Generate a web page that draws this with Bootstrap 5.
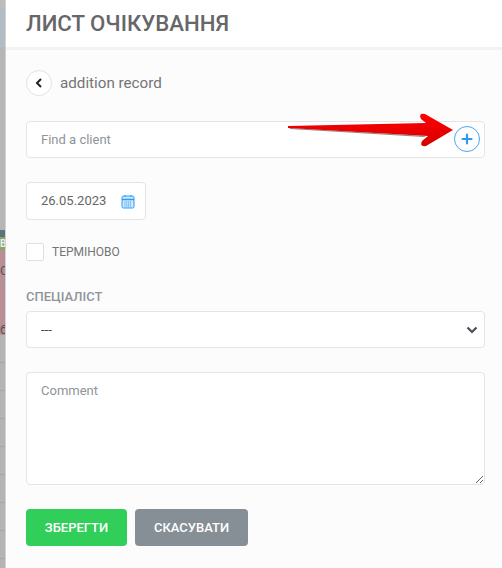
<!DOCTYPE html>
<html lang="uk">
<head>
  <meta charset="UTF-8">
  <meta name="viewport" content="width=device-width, initial-scale=1.0">
  <title>Лист очікування</title>
  <link href="https://cdn.jsdelivr.net/npm/bootstrap@5.3.2/dist/css/bootstrap.min.css" rel="stylesheet">
  <script defer src="https://cdn.jsdelivr.net/npm/bootstrap@5.3.2/dist/js/bootstrap.bundle.min.js"></script>
  <style>
    html, body { height: 100%; overflow: hidden; }
    body { font-family: Roboto, "Liberation Sans", sans-serif; background: #fcfcfc; color: #6c6c6c; }
    .side-strip { width: 6px; flex: none; background: #b4b4b4; border-right: 1px solid #d2d2d2; overflow: hidden; font-size: 13px; line-height: 14px; }
    .strip-top { height: 8px; background: #bcbcbc; }
    .strip-blue { height: 39px; background: #b3bcc2; }
    .strip-gray { height: 183px; background: #b6b6b6; }
    .strip-slate { height: 7px; background: #5f7179; }
    .strip-green { height: 13px; background: #89a65c; color: #eee; font-weight: 700; font-size: 10px; line-height: 13px; }
    .strip-pink { height: 85px; background: #b98f95; color: #555; padding-top: 14px; }
    .strip-pink span { display: block; }
    .strip-pink span + span { margin-top: 45px; }
    .strip-row { height: 28px; border-bottom: 1px solid #a6a6a6; }
    .wl-panel { min-width: 0; height: 568px; }
    .wl-head { height: 50px; padding: 0 20px; background: #fff; border-bottom: 3px solid #f2f2f2; }
    .wl-head h1 { font-size: 22.2px; font-weight: 500; line-height: 47px; margin: 0; color: #666769; }
    .wl-body { padding: 20px 17px 0 20px; }
    .back-btn { width: 26px; height: 26px; border: 1px solid #e2e2e2; border-radius: 50%; background: #fff; padding: 0; }
    .back-title { font-size: 15.2px; color: #757575; }
    .wl-input { background-color: #fff; border: 1px solid #e4e4e4; border-radius: 4px; font-size: 13px; color: #666; }
    .wl-input::placeholder { color: #8f9499; opacity: 1; }
    .client-row { height: 37px; margin-top: 25px; }
    .client-row input { height: 37px; padding: 0 14px; }
    .add-btn { right: 5px; top: 5px; width: 26px; height: 26px; border: 1px solid #4aa5f2; border-radius: 50%; background: #fff; padding: 0; }
    .arrow-over { left: 262px; top: -10px; pointer-events: none; }
    .date-box { width: 120px; height: 38px; margin-top: 24px; padding: 0 10px 0 14px; }
    .urgent-row { margin-top: 23px; height: 18px; }
    .urgent-box { width: 18px; height: 18px; border: 1px solid #e0e0e0; border-radius: 2px; background: #fff; }
    .urgent-text { font-size: 12px; color: #757575; }
    .spec-label { font-size: 13px; font-weight: 500; color: #8f959b; margin: 29px 0 7px; line-height: 14px; display: block; }
    .wl-select { height: 37px; padding: 0 36px 0 14px; font-size: 13px; color: #444; border-color: #e4e4e4; border-radius: 4px;
      background-image: url("data:image/svg+xml,%3csvg xmlns='http://www.w3.org/2000/svg' viewBox='0 0 12 8'%3e%3cpath fill='none' stroke='%23495057' stroke-width='2.2' d='M1.5 1.5 6 6l4.5-4.5'/%3e%3c/svg%3e");
      background-size: 12px 8px; background-position: right 6px center; }
    .wl-comment { height: 113px; margin-top: 24px; padding: 8px 14px; resize: both; width: 100%; display: block; }
    .wl-actions { margin-top: 24px; gap: 8px; }
    .wl-btn { height: 37px; border: 0; border-radius: 4px; color: #fff; font-size: 13px; font-weight: 500; padding: 0; }
    .wl-save { width: 101px; background: #31ce5a; }
    .wl-cancel { width: 113px; background: #868e96; }
  </style>
</head>
<body class="d-flex">
  <div class="side-strip">
    <div class="strip-top"></div>
    <div class="strip-blue"></div>
    <div class="strip-gray"></div>
    <div class="strip-slate"></div>
    <div class="strip-green">ВІ</div>
    <div class="strip-pink"><span>С</span><span>б.</span></div>
    <div class="strip-row"></div>
    <div class="strip-row"></div>
    <div class="strip-row"></div>
    <div class="strip-row"></div>
    <div class="strip-row"></div>
    <div class="strip-row"></div>
    <div class="strip-row"></div>
    <div class="strip-row"></div>
    <div class="strip-row"></div>
  </div>
  <div class="wl-panel flex-grow-1">
    <header class="wl-head"><h1>ЛИСТ ОЧІКУВАННЯ</h1></header>
    <form class="wl-body">
      <div class="d-flex align-items-center gap-2">
        <button type="button" class="back-btn d-flex align-items-center justify-content-center">
          <svg width="12" height="12" viewBox="0 0 12 12"><path d="M8 2 4 6l4 4" fill="none" stroke="#222" stroke-width="2"/></svg>
        </button>
        <span class="back-title">addition record</span>
      </div>

      <div class="client-row position-relative">
        <input type="text" class="wl-input w-100" placeholder="Find a client">
        <button type="button" class="add-btn position-absolute d-flex align-items-center justify-content-center">
          <svg width="12" height="12" viewBox="0 0 12 12"><path d="M6 1.5v9M1.5 6h9" stroke="#2f9bf0" stroke-width="2.2" stroke-linecap="round"/></svg>
        </button>
        <svg class="arrow-over position-absolute" width="170" height="42" viewBox="0 0 170 42">
          <defs>
            <linearGradient id="arrowFill" x1="0" y1="0" x2="0" y2="1">
              <stop offset="0" stop-color="#ff0000"/>
              <stop offset="1" stop-color="#d40000"/>
            </linearGradient>
          </defs>
          <path d="M2 17 L138 25 L136 26 L2 18 Z" fill="#8a8a8a"/>
          <path d="M0 15 L138 12 L133 8 Q130 2 137 3 L165 19 L138 35 Q131 36 134 30 L140 25 L0 17 Z" fill="url(#arrowFill)"/>
        </svg>
      </div>

      <div class="date-box wl-input d-flex align-items-center justify-content-between">
        <span>26.05.2023</span>
        <svg width="14" height="15" viewBox="0 0 14 15"><rect x="1" y="2" width="12" height="12" rx="1.5" fill="#cfe8fd" stroke="#2f9bf0"/><path d="M1 5.5h12" stroke="#2f9bf0" stroke-width="1.5"/><path d="M4 1v2M10 1v2" stroke="#2f9bf0"/><path d="M3.5 8h7M3.5 10h7M3.5 12h7" stroke="#2f9bf0" stroke-dasharray="1 .8"/></svg>
      </div>

      <div class="urgent-row d-flex align-items-center gap-2">
        <span class="urgent-box"></span>
        <span class="urgent-text">ТЕРМІНОВО</span>
      </div>

      <label class="spec-label" for="spec">СПЕЦІАЛІСТ</label>
      <select id="spec" class="form-select wl-select"><option>---</option></select>

      <textarea class="wl-input wl-comment" placeholder="Comment"></textarea>

      <div class="wl-actions d-flex">
        <button type="button" class="wl-btn wl-save">ЗБЕРЕГТИ</button>
        <button type="button" class="wl-btn wl-cancel">СКАСУВАТИ</button>
      </div>
    </form>
  </div>
</body>
</html>
